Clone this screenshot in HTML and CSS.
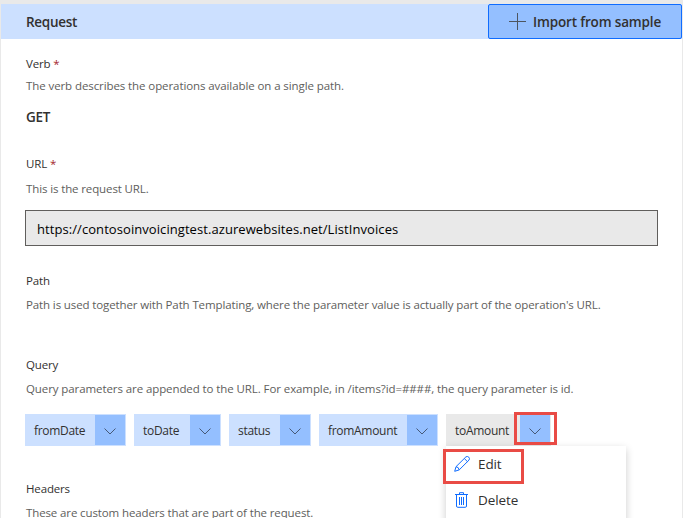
FILE: index.html
```html
<!DOCTYPE html>
<html lang="en">
<head>
<meta charset="utf-8">
<title>Request</title>
<link rel="stylesheet" href="styles.css">
</head>
<body>
<main class="panel">
  <header class="bar">
    <h1 class="title">Request</h1>
    <button class="import">
      <svg width="17" height="17" viewBox="0 0 17 17"><path d="M8.500 0v17M0 8.500h17"/></svg>
      <span>Import from sample</span>
    </button>
  </header>
  <section class="field verb">
    <h2 class="label">Verb <span class="req">*</span></h2>
    <p class="desc">The verb describes the operations available on a single path.</p>
    <p class="method">GET</p>
  </section>
  <section class="field url">
    <h2 class="label">URL <span class="req">*</span></h2>
    <p class="desc">This is the request URL.</p>
    <div class="input">https://contosoinvoicingtest.azurewebsites.net/ListInvoices</div>
  </section>
  <section class="field path">
    <h2 class="label">Path</h2>
    <p class="desc">Path is used together with Path Templating, where the parameter value is actually part of the operation's URL.</p>
  </section>
  <section class="field query">
    <h2 class="label">Query</h2>
    <p class="desc tight">Query parameters are appended to the URL. For example, in /items?id=####, the query parameter is id.</p>
    <div class="chips">
      <div class="chip w-fromdate"><span class="name">fromDate</span><button class="drop"><svg width="12" height="7" viewBox="0 0 12 7"><path d="M.5.5 6 6 11.500.5"/></svg></button></div>
      <div class="chip w-todate"><span class="name">toDate</span><button class="drop"><svg width="12" height="7" viewBox="0 0 12 7"><path d="M.5.5 6 6 11.500.5"/></svg></button></div>
      <div class="chip w-status"><span class="name">status</span><button class="drop"><svg width="12" height="7" viewBox="0 0 12 7"><path d="M.5.5 6 6 11.500.5"/></svg></button></div>
      <div class="chip w-fromamount"><span class="name">fromAmount</span><button class="drop"><svg width="12" height="7" viewBox="0 0 12 7"><path d="M.5.5 6 6 11.500.5"/></svg></button></div>
      <div class="chip w-toamount open"><span class="name">toAmount</span><button class="drop"><svg width="12" height="7" viewBox="0 0 12 7"><path d="M.5.5 6 6 11.500.5"/></svg></button>
        <div class="menu">
          <div class="item"><svg width="16" height="16" viewBox="0 0 16 16"><path d="M.7 15.300 2 10.700 11.900.9Q13.400-.2 14.800 1.200 16.100 2.600 15 4.100L5.200 13.900ZM10.300 2.500 13.500 5.700M2 10.700Q4.800 11 5.200 13.900"/></svg><span>Edit</span></div>
          <div class="item"><svg width="16" height="16" viewBox="0 0 16 16"><path d="M1 2.500h13M5.500 2.500V.7h4v1.800M2.500 2.500V14q0 1.300 1.300 1.300h7.400q1.300 0 1.300-1.300V2.500M5.500 5v8M7.500 5v8M9.500 5v8"/></svg><span>Delete</span></div>
        </div>
        <div class="mark mark-drop"></div>
        <div class="mark mark-edit"></div>
      </div>
    </div>
  </section>
  <section class="field headers">
    <h2 class="label">Headers</h2>
    <p class="desc">These are custom headers that are part of the request.</p>
  </section>
</main>
</body>
</html>
```
FILE: styles.css
```css
* { box-sizing: border-box; margin: 0; }
html, body { height: 518px; overflow: hidden; }
body { background: #fff; font-family: "Open Sans", "Noto Sans", sans-serif; color: #323130; }
button { font: inherit; color: inherit; padding: 0; border: 0; }
svg { fill: none; stroke: currentColor; flex: none; }
p, span, .input { white-space: nowrap; }

.panel { height: 518px; border: solid #e9e9e9; border-width: 4px 1px 0; }
.bar { display: flex; height: 35px; background: #cce0ff; }
.title { flex: 1; padding-left: 25px; font-size: 13.500px; font-weight: 600; line-height: 36px; letter-spacing: -.3px; }
.import { display: flex; align-items: center; gap: 7px; width: 194px; height: 35px; padding-left: 20px; background: #94bfff; border: 1px solid #0f6cff; border-radius: 2px; font-size: 13.500px; font-weight: 600; letter-spacing: -.16px; }
.import svg { stroke: #4d5560; }

.field { padding: 0 24px; }
.label { height: 18px; padding-left: 1px; font-size: 11.500px; font-weight: 400; line-height: 18px; letter-spacing: -.15px; }
.req { color: #a4262c; }
.desc { height: 18px; padding-left: 1px; margin-top: 6px; font-size: 11.500px; line-height: 18px; letter-spacing: -.12px; color: #605e5c; }
.desc.tight { letter-spacing: -.09px; }
.verb { padding-top: 16px; }
.verb .desc { margin-top: 4px; letter-spacing: -.09px; }
.method { margin-top: 12px; padding-left: 1px; height: 20px; font-size: 13.500px; font-weight: 600; line-height: 20px; letter-spacing: -.3px; }
.url { padding-top: 28px; }
.url .desc { margin-top: 7px; }
.input { height: 36px; margin-top: 12px; padding-left: 11px; background: #e9e9e9; border: 1px solid #605e5c; font-size: 13px; line-height: 36px; letter-spacing: .07px; color: #000; }
.path { padding-top: 26px; }
.query { padding-top: 42px; }

.chips { display: flex; gap: 8px; margin-top: 16px; }
.chip { display: flex; position: relative; justify-content: space-between; height: 32px; padding: 1px; background: #cce0ff; font-size: 12px; letter-spacing: -.3px; }
.name { padding-left: 8px; line-height: 31px; }
.drop { display: flex; align-items: center; justify-content: center; width: 30px; height: 30px; padding-top: 3px; background: #94bfff; }
.drop svg { stroke: #465978; }
.w-fromdate { width: 101px; }
.w-todate { width: 87px; }
.w-status { width: 82px; }
.w-fromamount { width: 119px; }
.w-toamount { width: 105px; }
.open { background: #e9e9e9; }

.menu { position: absolute; left: 0; top: 32px; width: 180px; height: 84px; background: #fff; box-shadow: 0 3px 8px rgba(0, 0, 0, .2); }
.item { display: flex; align-items: center; gap: 8px; height: 36px; padding-left: 8px; font-size: 13.500px; letter-spacing: -.1px; }
.item svg { stroke: #0f6cff; }
.mark { position: absolute; border: 3px solid #e94b45; }
.mark-drop { left: 68px; top: -2px; width: 43px; height: 33px; }
.mark-edit { left: -3px; top: 35px; width: 81px; height: 35px; }

.headers { padding-top: 34px; }
```
